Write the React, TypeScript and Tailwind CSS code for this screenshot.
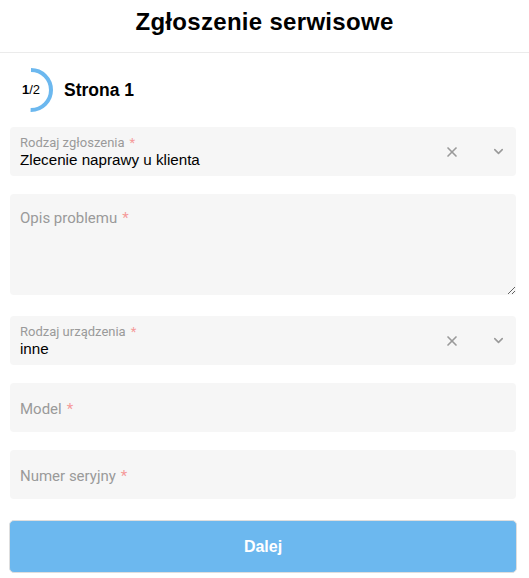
import { X, ChevronDown } from 'lucide-react'

const sans = { fontFamily: '"Liberation Sans", Arial, sans-serif' }
const roboto = { fontFamily: 'Roboto, "Liberation Sans", sans-serif' }

function Req() {
  return <span className="text-[#f59a9a] ml-[5px]">*</span>
}

function SelectField({ label, value }: { label: string; value: string }) {
  return (
    <div className="h-[49px] bg-[#f6f6f6] rounded-[4px] flex items-center pl-[10px] pr-[10px]">
      <div className="flex-1 flex flex-col pt-[1px]">
        <div className="text-[13px] leading-[14px] text-[#9a9a9a]" style={roboto}>
          {label}
          <Req />
        </div>
        <div className="text-[15.2px] leading-[19px] text-black" style={sans}>
          {value}
        </div>
      </div>
      <X className="w-[16px] h-[16px] text-[#9a9a9a] mr-[31px]" strokeWidth={2.5} />
      <ChevronDown className="w-[15px] h-[15px] text-[#9a9a9a]" strokeWidth={2.5} />
    </div>
  )
}

function TextField({ label }: { label: string }) {
  return (
    <div className="h-[49px] bg-[#f6f6f6] rounded-[4px] flex items-center pl-[10px] pt-[3px]">
      <span className="text-[15px] text-[#9a9a9a]" style={roboto}>
        {label}
        <Req />
      </span>
    </div>
  )
}

export default function App() {
  const c = 2 * Math.PI * 20
  return (
    <div className="w-[529px] h-[578px] bg-white overflow-hidden" style={sans}>
      <div className="h-[53px] border-b border-[#ebebeb] flex items-start justify-center pt-[7px]">
        <h1 className="text-[24px] leading-[30px] font-bold text-black tracking-[0.3px]">Zgłoszenie serwisowe</h1>
      </div>
      <div className="h-[74px] flex items-center pl-[8px]">
        <div className="relative w-[46px] h-[46px] flex items-center justify-center">
          <svg width="46" height="46" viewBox="0 0 46 46" className="absolute inset-0">
            <circle
              cx="23"
              cy="23"
              r="20"
              fill="none"
              stroke="#6cb8ef"
              strokeWidth="4"
              strokeDasharray={`${c / 2} ${c}`}
              transform="rotate(-90 23 23)"
            />
          </svg>
          <span className="relative text-[13px] text-black">
            <span className="font-bold">1</span>/2
          </span>
        </div>
        <span className="ml-[10px] text-[17.5px] font-bold text-black">Strona 1</span>
      </div>
      <div className="pl-[10px] pr-[13px] flex flex-col">
        <SelectField label="Rodzaj zgłoszenia" value="Zlecenie naprawy u klienta" />
        <div className="relative mt-[18px]">
          <textarea className="block w-full h-[101px] bg-[#f6f6f6] rounded-[4px] resize-y outline-none" />
          <span
            className="absolute left-[10px] top-[13px] text-[15px] text-[#9a9a9a] pointer-events-none"
            style={roboto}
          >
            Opis problemu
            <Req />
          </span>
        </div>
        <div className="mt-[21px]">
          <SelectField label="Rodzaj urządzenia" value="inne" />
        </div>
        <div className="mt-[18px]">
          <TextField label="Model" />
        </div>
        <div className="mt-[18px]">
          <TextField label="Numer seryjny" />
        </div>
      </div>
      <div className="pl-[9px] pr-[12px] mt-[21px]">
        <button className="w-full h-[53px] bg-[#6cb8ef] border border-[#dedede] rounded-[5px] text-white font-bold text-[16px]">
          Dalej
        </button>
      </div>
    </div>
  )
}
